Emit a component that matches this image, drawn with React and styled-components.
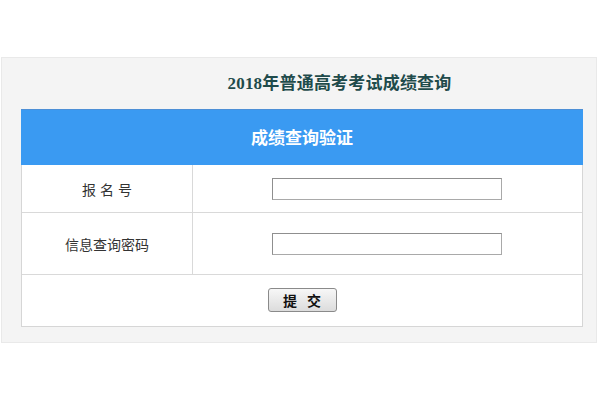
import React from "react";
import styled, { createGlobalStyle } from "styled-components";

const Global = createGlobalStyle`
  html, body { margin: 0; padding: 0; background: #ffffff; }
  body { font-family: "Noto Sans CJK SC", "Liberation Sans", sans-serif; }
`;

const Page = styled.div`
  width: 600px;
  height: 400px;
  padding-top: 57px;
  box-sizing: border-box;
`;

const Panel = styled.div`
  margin: 0 3px 0 1px;
  background: #f4f4f4;
  border: 1px solid #e9e9e9;
  padding: 0 14px 15px 19px;
  box-sizing: border-box;
`;

const Title = styled.h1`
  margin: 0;
  height: 51px;
  box-sizing: border-box;
  display: flex;
  align-items: center;
  justify-content: center;
  padding-left: 76px;
  padding-bottom: 4px;
  font-family: "Liberation Serif", "Noto Sans CJK SC", serif;
  font-weight: bold;
  font-size: 17px;
  color: #1f4b4b;
  letter-spacing: 0.2px;
`;

const Table = styled.div`
  width: 562px;
  border: 1px solid #d6d6d6;
  border-top: none;
  background: #ffffff;
  box-sizing: border-box;
`;

const Header = styled.div`
  height: 56px;
  margin: 0 -1px;
  background: #3a9af2;
  border-top: 1px solid #4d8fd6;
  box-sizing: border-box;
  display: flex;
  align-items: center;
  justify-content: center;
  color: #ffffff;
  font-weight: bold;
  font-size: 17px;
  padding-bottom: 2px;
`;

const Row = styled.div`
  display: grid;
  grid-template-columns: 171px 1fr;
  height: ${(p) => p.$h}px;
  border-top: ${(p) => (p.$first ? "none" : "1px solid #d9d9d9")};
  box-sizing: border-box;
`;

const Label = styled.div`
  border-right: 1px solid #d9d9d9;
  display: flex;
  align-items: center;
  justify-content: center;
  font-size: ${(p) => p.$size || 14}px;
  letter-spacing: ${(p) => p.$spacing || 0}px;
  color: #333333;
  padding-left: ${(p) => p.$spacing || 0}px;
`;

const Field = styled.div`
  display: flex;
  align-items: center;
  padding-left: 79px;
`;

const Input = styled.input`
  width: 230px;
  height: 22px;
  box-sizing: border-box;
  border: 1px solid #a9a9a9;
  border-top-color: #8f8f8f;
  border-left-color: #8f8f8f;
  background: #ffffff;
  margin: 0;
  padding: 0 3px;
  outline: none;
`;

const FooterRow = styled.div`
  height: 52px;
  border-top: 1px solid #d9d9d9;
  display: flex;
  align-items: center;
  justify-content: center;
  box-sizing: border-box;
  padding-bottom: 2px;
`;

const Button = styled.button`
  width: 69px;
  height: 24px;
  border: 1px solid #8a8a8a;
  border-radius: 3px;
  background: linear-gradient(#f7f7f7, #dcdcdc);
  font-family: "Noto Sans CJK SC", sans-serif;
  font-weight: bold;
  font-size: 14px;
  letter-spacing: 10px;
  padding: 0 0 0 10px;
  color: #111;
  line-height: 20px;
`;

export default function App() {
  return (
    <>
      <Global />
      <Page>
        <Panel>
          <Title>2018年普通高考考试成绩查询</Title>
          <Table>
            <Header>成绩查询验证</Header>
            <Row $h={47} $first>
              <Label $size={14} $spacing={4}>报名号</Label>
              <Field>
                <Input type="text" />
              </Field>
            </Row>
            <Row $h={62}>
              <Label $size={14}>信息查询密码</Label>
              <Field>
                <Input type="password" />
              </Field>
            </Row>
            <FooterRow>
              <Button type="button">提交</Button>
            </FooterRow>
          </Table>
        </Panel>
      </Page>
    </>
  );
}
